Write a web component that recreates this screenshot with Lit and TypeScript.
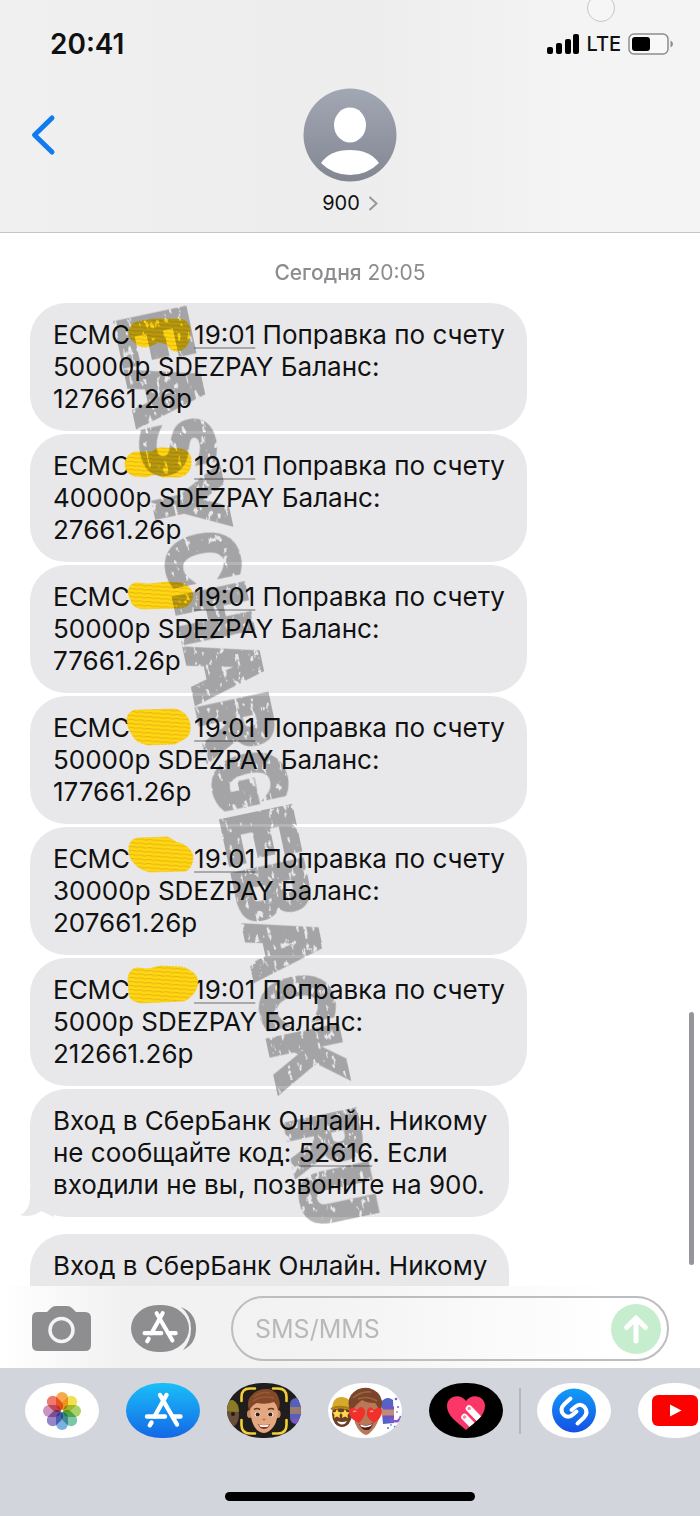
import { LitElement, html, css, svg } from 'lit';
import { customElement, property } from 'lit/decorators.js';

interface Sms {
  lead?: string;
  code?: string;
  before?: string;
  after?: string;
  smudge?: string;
  tail?: boolean;
  gap?: boolean;
}

const MESSAGES: Sms[] = [
  {
    lead: 'ЕСМС',
    code: '19:01',
    after: ' Поправка по счету\n50000р SDEZPAY Баланс:\n127661.26р',
    smudge: 'M9 25Q8 13 22 12L34 10L60 10Q71 12 70 25Q70 36 62 41Q51 45 47 35L38 33Q31 38 24 38Q16 37 15 33Q9 31 9 25Z',
  },
  {
    lead: 'ЕСМС',
    code: '19:01',
    after: ' Поправка по счету\n40000р SDEZPAY Баланс:\n27661.26р',
    smudge: 'M5 24Q6 14 15 12L32 12Q36 7 46 8L62 9Q72 12 71 23Q71 34 60 37L42 37L36 34L26 37L14 36Q5 33 5 24Z',
  },
  {
    lead: 'ЕСМС',
    code: '19:01',
    after: ' Поправка по счету\n50000р SDEZPAY Баланс:\n77661.26р',
    smudge: 'M8 22Q9 11 18 12L28 13L48 11L62 12Q73 17 73 25Q71 36 60 37L22 38Q12 36 11 30Z',
  },
  {
    lead: 'ЕСМС',
    code: '19:01',
    after: ' Поправка по счету\n50000р SDEZPAY Баланс:\n177661.26р',
    smudge: 'M7 17Q8 8 18 8L54 7Q67 9 70 22Q71 32 66 36L55 42L28 43Q15 40 13 34Q7 26 7 17Z',
  },
  {
    lead: 'ЕСМС',
    code: '19:01',
    after: ' Поправка по счету\n30000р SDEZPAY Баланс:\n207661.26р',
    smudge: 'M9 14Q10 5 20 5L48 4L56 9Q70 12 73 23Q73 34 66 38L30 39Q18 36 14 30Q8 24 9 14Z',
  },
  {
    lead: 'ЕСМС',
    code: '19:01',
    after: ' Поправка по счету\n5000р SDEZPAY Баланс:\n212661.26р',
    smudge: 'M8 15Q9 4 18 4L28 5L40 2L62 3Q76 7 78 17Q77 31 64 37L22 39Q10 38 9 30Z',
  },
  {
    before: 'Вход в СберБанк Онлайн. Никому\nне сообщайте код: ',
    code: '52616',
    after: '. Если\nвходили не вы, позвоните на 900.',
    tail: true,
  },
  {
    before: 'Вход в СберБанк Онлайн. Никому',
    gap: true,
  },
];

const PETALS = ['#f9a13a', '#f2dc3c', '#9fcf5a', '#6fc0a0', '#6ba9dc', '#8b78c4', '#c887b8', '#ee6a5e'];

const storeGlyph = svg`
  <g fill="none" stroke="#fff" stroke-width="4.4" stroke-linecap="round">
    <path d="M40.5 12L28.5 33.5M34 12L51 41.5"/>
    <path d="M21 33.5H39M47 33.5H54.5"/>
    <path d="M25.5 39.5L23.8 42.3"/>
  </g>`;

const photos = svg`
  <rect width="74" height="55" fill="#fff"/>
  <g class="petals">
    ${PETALS.map((c, i) => svg`
      <rect x="31" y="9" width="12" height="18" rx="6" fill=${c} transform=${`rotate(${i * 45} 37 28)`}/>`)}
  </g>`;

const store = svg`
  <defs>
    <linearGradient id="store" x1="0" y1="0" x2="0" y2="1">
      <stop offset="0" stop-color="#19bff9"/><stop offset="1" stop-color="#1467e6"/>
    </linearGradient>
  </defs>
  <rect width="74" height="55" fill="url(#store)"/>
  ${storeGlyph}`;

const face = svg`
  <ellipse cx="22.6" cy="31" rx="2.6" ry="4" fill="#d08a63"/>
  <ellipse cx="51" cy="31" rx="2.6" ry="4" fill="#d08a63"/>
  <path d="M23 22Q23 14 37 14Q51 14 51 23Q51.5 36 47 43Q42 50 37 50Q31 50 27 43Q23 36 23 22Z" fill="#e5a780"/>
  <path d="M22 28Q19 17 25 12Q31 5 42 6Q50 8 52 16Q54 22 51 28Q50 22 47 19Q39 22 30 20Q25 22 22 28Z" fill="#83482a"/>
  <path d="M27 14Q34 8 43 10M26 18Q35 12 47 15" stroke="#9a5835" stroke-width="1.5" fill="none"/>`;

const memoji = svg`
  <rect width="74" height="55" fill="#201e1d"/>
  <ellipse cx="4" cy="32" rx="8" ry="12" fill="#6b4d3c"/>
  <path d="M-3 28Q-2 16 6 17Q12 20 12 29Z" fill="#8b7b25"/>
  <circle cx="6" cy="31" r="2" fill="#251b16"/>
  <rect x="63" y="15" width="14" height="26" rx="6" fill="#5660b8"/>
  <rect x="63" y="24" width="12" height="7" fill="#9b7a70"/>
  <path d="M64 36h10v4H66Z" fill="#7f55c0"/>
  ${face}
  <path d="M27 26.5Q30 24.5 33 26.5M41 26.5Q44 24.5 47 26.5" stroke="#6b3b22" stroke-width="1.6" fill="none"/>
  <ellipse cx="30.5" cy="31.5" rx="2.8" ry="2.2" fill="#fff"/><ellipse cx="43.5" cy="31.5" rx="2.8" ry="2.2" fill="#fff"/>
  <circle cx="30.7" cy="31.5" r="2.1" fill="#33201a"/><circle cx="43.3" cy="31.5" r="2.1" fill="#33201a"/>
  <path d="M35.5 36Q37 37.5 38.5 36" stroke="#b96f50" stroke-width="1.3" fill="none"/>
  <path d="M31 41Q37 43 43 41Q41.5 46 37 46Q32.5 46 31 41Z" fill="#8e342c"/>
  <path d="M32 41.6Q37 43 42 41.6L41 43.6Q37 44.6 33 43.6Z" fill="#fff"/>
  <g fill="none" stroke="#f5cf36" stroke-width="2.6" stroke-linecap="round">
    <path d="M14.5 18V14Q14.5 5.5 23 5.5H28"/>
    <path d="M46 5.5H51Q59.5 5.5 59.5 14V18"/>
    <path d="M14.5 37V42Q14.5 50.5 23 50.5H28"/>
    <path d="M46 50.5H51Q59.5 50.5 59.5 42V37"/>
  </g>`;

const stickers = svg`
  <rect width="74" height="55" fill="#fff"/>
  <ellipse cx="14" cy="31" rx="10" ry="13" fill="#6b4026"/>
  <path d="M4 27Q4 14 14 14Q25 15 24 28Q14 23 4 27Z" fill="#d7a928"/>
  <path d="M3 26Q13 21 25 27" stroke="#a77d17" stroke-width="2" fill="none"/>
  <path d="M9 26l1.5 3 3 .5-2 2.5.5 3-3-1.5-3 1.5.5-3-2-2.5 3-.5Z" fill="#ffd94a"/>
  <path d="M17 26l1.5 3 3 .5-2 2.5.5 3-3-1.5-3 1.5.5-3-2-2.5 3-.5Z" fill="#ffd94a"/>
  <path d="M9 38Q14 40 19 38Q17 42 13 41.5Q10 41 9 38Z" fill="#fff"/>
  <path d="M53 19Q59 12 65 17L66 40L55 41Z" fill="#5364c6"/>
  <path d="M53 25h13v9H54Z" fill="#bd8d75"/>
  <path d="M55 25h11M55 34h11" stroke="#7252c8" stroke-width="3"/>
  <path d="M62 37Q72 41 73 33" stroke="#8a55ce" stroke-width="2.5" fill="none"/>
  <g fill="#7b59dc">
    <circle cx="68" cy="16" r="1.3"/><circle cx="70" cy="24" r="1"/><circle cx="67" cy="44" r="1.2"/><circle cx="60" cy="45" r="1"/>
    <circle cx="69" cy="29" r="1" fill="#e670ac"/><circle cx="63" cy="42" r="1" fill="#54b5e6"/>
  </g>
  <path d="M25 24Q25 14 39 13Q52 14 52 25Q52 37 47 44Q42 51 38 52Q31 50 27 40Z" fill="#b97958"/>
  <path d="M23 30Q18 19 23 12Q30 3 41 5Q52 8 54 18Q55 24 51 29Q50 23 47 20Q38 20 34 17Q26 23 23 30Z" fill="#7b452b"/>
  <path d="M25 15Q33 8 43 9M30 16Q39 12 49 18" stroke="#9c6240" stroke-width="1.5" fill="none"/>
  <g fill="#f12f2b">
    <path d="M31 40Q20 35 21 28Q24 22 29 27Q33 21 37 27Q38 33 31 40Z"/>
    <path d="M46 40Q37 34 39 28Q42 21 46 27Q52 22 54 28Q54 35 46 40Z"/>
  </g>
  <path d="M25 29q2-2 3 0M42 29q2-2 3 0" stroke="#ff8d86" stroke-width="1.5" fill="none"/>
  <path d="M31 41Q38 44 45 40Q43 48 38 47Q34 47 31 41Z" fill="#4b1b19"/>
  <path d="M32 41.5Q38 44 44 41L43 43Q38 45.5 33 43.5Z" fill="#fff"/>`;

const touch = svg`
  <defs>
    <clipPath id="heart">
      <path d="M37 47C28 39 18 33 18 23C18 12 32 10 37 18C42 10 56 12 56 23C56 33 46 39 37 47Z"/>
    </clipPath>
  </defs>
  <rect width="74" height="55" fill="#000"/>
  <g clip-path="url(#heart)">
    <rect width="74" height="55" fill="#fb3767"/>
    <path d="M40 25.5L56 42M35.5 34L50 49" stroke="#fff" stroke-width="6.5" stroke-linecap="round"/>
  </g>
  <circle cx="40.2" cy="25.5" r="1.8" fill="#f48ba8"/><circle cx="35.6" cy="34" r="1.8" fill="#f48ba8"/>`;

const shazam = svg`
  <defs>
    <linearGradient id="shazam" x1="0" y1="0" x2="0" y2="1">
      <stop offset="0" stop-color="#129cf7"/><stop offset="1" stop-color="#1450e6"/>
    </linearGradient>
  </defs>
  <rect width="74" height="55" fill="#fff"/>
  <circle cx="37" cy="27.5" r="22" fill="url(#shazam)"/>
  <g fill="none" stroke="#fff" stroke-width="4" stroke-linecap="round">
    <path d="M33.5 15.5L27.5 21Q22 26.5 26.5 31.5Q31 36 36 31.5L39.5 28.5"/>
    <path d="M40.5 40.5L46.5 35Q52 29.5 47.5 24Q43 19.5 38 24L34.5 27"/>
  </g>`;

const youtube = svg`
  <rect width="74" height="55" fill="#fff"/>
  <rect x="14" y="12" width="46" height="31" rx="6" fill="#fd0000"/>
  <path d="M32 21.5L43.5 27.5L32 33.5Z" fill="#fff"/>`;

@customElement('sms-bubble')
export class SmsBubble extends LitElement {
  static styles = css`
    :host {
      display: block;
      position: relative;
      box-sizing: border-box;
      width: fit-content;
      min-height: 128px;
      padding: 16px 22px 16px 23px;
      border-radius: 36px;
      background: #e8e8ea;
      color: #111;
      font-size: 26px;
      line-height: 32px;
      white-space: pre-line;
    }

    .hidden-part {
      display: inline-block;
      position: relative;
      width: 64px;
      height: 20px;
    }

    .smudge {
      position: absolute;
      top: -15px;
      left: -10px;
      width: 80px;
      height: 50px;
    }

    a {
      color: inherit;
      text-decoration: underline;
      text-decoration-color: #a9a9ac;
      text-decoration-thickness: 2px;
      text-underline-offset: 3px;
    }

    .tail {
      position: absolute;
      left: -10px;
      bottom: 0;
      width: 36px;
      height: 30px;
    }
  `;

  @property({ attribute: false }) message!: Sms;

  private renderSmudge(path: string) {
    return html`<span class="hidden-part"><svg class="smudge" viewBox="0 0 80 50" aria-hidden="true">
      <defs>
        <pattern id="hatch" width="9" height="4" patternUnits="userSpaceOnUse" patternTransform="rotate(4)">
          <rect width="9" height="4" fill="#ffd814"/>
          <path d="M0 1L4 0.5L9 1.3" stroke="#e9b010" stroke-width="1" fill="none"/>
        </pattern>
      </defs>
      <path d=${path} fill="url(#hatch)" stroke="#f7ca14" stroke-width="1" stroke-dasharray="2 1"/>
    </svg></span>`;
  }

  render() {
    const m = this.message;
    return html`${m.tail
      ? html`<svg class="tail" viewBox="0 0 36 30" aria-hidden="true"><path d="M10 0V12Q9 24 0 28Q12 31 21 24L34 30V0Z" fill="#e8e8ea"/></svg>`
      : ''}${m.lead}${m.smudge ? this.renderSmudge(m.smudge) : ''}${m.before}${m.code ? html`<a href="#">${m.code}</a>` : ''}${m.after}`;
  }
}

@customElement('app-root')
export class AppRoot extends LitElement {
  static styles = css`
    :host {
      display: flex;
      flex-direction: column;
      height: 100vh;
      overflow: hidden;
      background: #fff;
      font-family: Inter, 'Liberation Sans', sans-serif;
      color: #111;
    }

    svg {
      display: block;
    }

    button {
      padding: 0;
      border: none;
      background: none;
      font: inherit;
      color: inherit;
    }

    header {
      position: relative;
      flex: none;
      border-bottom: 1px solid #c4c4c6;
      background: linear-gradient(90deg, #f0f0f1, #ededee 50%, #f4f4f4 85%);
    }

    .touch-ring {
      position: absolute;
      top: -6px;
      right: 85px;
      width: 26px;
      height: 26px;
      border: 1px solid #c6c6cc;
      border-radius: 50%;
      background: #f6f6f6;
    }

    .status {
      display: flex;
      align-items: center;
      justify-content: space-between;
      height: 88px;
      padding: 0 27px 0 50px;
    }

    .clock {
      font-size: 28px;
      font-weight: 600;
    }

    .signal {
      display: flex;
      align-items: center;
      gap: 7px;
      font-size: 20px;
      font-weight: 500;
    }

    .contact-row {
      display: grid;
      grid-template-columns: 1fr auto 1fr;
      align-items: start;
      padding: 0 28px 16px;
    }

    .back {
      width: 30px;
      margin-top: 26px;
    }

    .contact {
      display: flex;
      flex-direction: column;
      align-items: center;
      gap: 8px;
    }

    .contact-name {
      display: flex;
      align-items: center;
      gap: 8px;
      font-size: 20px;
      line-height: 26px;
    }

    .conversation {
      position: relative;
      flex: 1;
      min-height: 0;
      overflow: hidden;
      padding: 27px 30px 0;
    }

    .date {
      margin: 0 0 17px;
      text-align: center;
      font-size: 21px;
      line-height: 26px;
      color: #8c8c90;
    }

    .date b {
      font-weight: 500;
    }

    .messages {
      display: flex;
      flex-direction: column;
      gap: 3px;
    }

    .spaced {
      margin-top: 14px;
    }

    .watermark {
      position: absolute;
      top: 60px;
      left: 100px;
      font-family: 'DejaVu Sans Mono', monospace;
      font-size: 94px;
      font-weight: 700;
      pointer-events: none;
    }

    .thumb {
      position: absolute;
      top: 74%;
      right: 6px;
      width: 5px;
      height: 24%;
      border-radius: 3px;
      background: #96969a;
    }

    .compose {
      display: flex;
      flex: none;
      align-items: center;
      gap: 34px;
      padding: 10px 31px 7px 32px;
      background: linear-gradient(90deg, #fff, #f1f1f1 18%, #f3f3f3 45%, #fff 88%);
    }

    .apps {
      margin: 0 0 0 6px;
    }

    .field {
      display: flex;
      flex: 1;
      align-items: center;
      min-width: 0;
      box-sizing: border-box;
      height: 65px;
      padding: 0 6px 0 22px;
      border: 2px solid #bdbdbf;
      border-radius: 33px;
    }

    .field input {
      flex: 1;
      min-width: 0;
      padding: 0;
      border: none;
      outline: none;
      background: none;
      font: inherit;
      font-size: 25px;
    }

    .field input::placeholder {
      color: #b9b9bb;
      opacity: 1;
    }

    .dock {
      flex: none;
      background: #d2d5db;
    }

    .strip {
      display: flex;
      align-items: center;
      gap: 27px;
      overflow: hidden;
      padding: 15px 0 0 25px;
    }

    .app {
      flex: none;
      width: 74px;
      height: 55px;
      overflow: hidden;
      border-radius: 36px / 28px;
    }

    .divider {
      flex: none;
      width: 2px;
      height: 46px;
      margin: 0 -11px;
      background: #b5b7bd;
    }

    .petals rect {
      mix-blend-mode: multiply;
      opacity: 0.9;
    }

    .home {
      width: 250px;
      height: 9px;
      margin: 54px auto 15px;
      border-radius: 5px;
      background: #000;
    }
  `;

  private renderApp(label: string, icon: unknown) {
    return html`<button class="app" aria-label=${label}>
      <svg width="74" height="55" viewBox="0 0 74 55">${icon}</svg>
    </button>`;
  }

  private renderHeader() {
    return html`
      <header>
        <div class="touch-ring"></div>
        <div class="status">
          <span class="clock">20:41</span>
          <div class="signal">
            <svg width="32" height="20" viewBox="0 0 32 20">
              <rect x="0" y="13" width="6" height="7" rx="2"/>
              <rect x="9" y="9" width="6" height="11" rx="2"/>
              <rect x="18" y="5" width="6" height="15" rx="2"/>
              <rect x="26" y="0" width="6" height="20" rx="2"/>
            </svg>
            <span>LTE</span>
            <svg width="45" height="22" viewBox="0 0 45 22">
              <rect x="1" y="1" width="39" height="20" rx="5" fill="#f8f8f8" stroke="#8d8d8f" stroke-width="1.5"/>
              <rect x="4" y="4" width="18" height="14" rx="3"/>
              <path d="M42.5 7.5Q45 8.5 45 11Q45 13.5 42.5 14.5Z" fill="#8d8d8f"/>
            </svg>
          </div>
        </div>
        <div class="contact-row">
          <button class="back" aria-label="Назад">
            <svg width="30" height="42" viewBox="0 0 30 42">
              <path d="M24 4L6.5 21L24 38" fill="none" stroke="#0f7bee" stroke-width="5" stroke-linecap="round" stroke-linejoin="round"/>
            </svg>
          </button>
          <button class="contact">
            <svg width="94" height="94" viewBox="0 0 94 94">
              <defs>
                <linearGradient id="avatar" x1="0" y1="0" x2="0" y2="1">
                  <stop offset="0" stop-color="#a2a7b4"/><stop offset="1" stop-color="#838792"/>
                </linearGradient>
              </defs>
              <circle cx="47" cy="47" r="46.5" fill="url(#avatar)"/>
              <ellipse cx="47" cy="37" rx="16" ry="17.5" fill="#fff"/>
              <path d="M18 75Q27 62 47 62Q67 62 76 75Q64 87 47 87Q30 87 18 75Z" fill="#fff"/>
            </svg>
            <span class="contact-name">
              900
              <svg width="10" height="16" viewBox="0 0 10 16">
                <path d="M1.5 2L8.5 8.5L1.5 15" fill="none" stroke="#98989c" stroke-width="2"/>
              </svg>
            </span>
          </button>
        </div>
      </header>`;
  }

  private renderWatermark() {
    return html`
      <svg class="watermark" width="310" height="960" viewBox="0 0 310 960" aria-hidden="true">
        <defs>
          <filter id="worn" x="-2%" y="-10%" width="104%" height="120%">
            <feTurbulence type="fractalNoise" baseFrequency="0.09 0.2" numOctaves="4" seed="8" result="noise"/>
            <feColorMatrix in="noise" type="matrix" values="0 0 0 0 0  0 0 0 0 0  0 0 0 0 0  24 0 0 0 -15.6" result="scratches"/>
            <feComposite in="SourceGraphic" in2="scratches" operator="out"/>
          </filter>
        </defs>
        <g opacity="0.29" stroke="#000" stroke-width="6">
          <g transform="translate(15 23) rotate(78)">
            <text x="0" y="0" filter="url(#worn)">EASYCHARGEBACK</text>
            <text x="821" y="0" filter="url(#worn)">RU</text>
          </g>
        </g>
      </svg>`;
  }

  private renderCompose() {
    return html`
      <div class="compose">
        <button aria-label="Камера">
          <svg width="59" height="46" viewBox="0 0 59 46">
            <path d="M5 6H15L19 2Q21 0 24 0H35Q38 0 40 2L44 6H53Q59 6 59 12V39Q59 45 53 45H6Q0 45 0 39V12Q0 6 5 6Z" fill="#8e8e90"/>
            <circle cx="29.5" cy="24" r="11.5" fill="none" stroke="#f4f4f4" stroke-width="3.5"/>
          </svg>
        </button>
        <button class="apps" aria-label="Приложения">
          <svg width="66" height="47" viewBox="0 0 66 47">
            <path d="M50 2Q65 8 65 23.5Q65 39 52 45Q60 36 60 23.5Q60 10 50 2Z" fill="#8e8e90"/>
            <rect width="58" height="47" rx="27" ry="23.5" fill="#8e8e90"/>
            <g transform="translate(-6 -3) scale(0.93)">${storeGlyph}</g>
          </svg>
        </button>
        <div class="field">
          <input type="text" aria-label="SMS/MMS" placeholder="SMS/MMS" />
          <button aria-label="Отправить">
            <svg width="50" height="50" viewBox="0 0 50 50">
              <circle cx="25" cy="25" r="25" fill="#c7edcf"/>
              <path d="M25 37V15M15.5 23.5L25 14L34.5 23.5" fill="none" stroke="#fff" stroke-width="5" stroke-linecap="round" stroke-linejoin="round"/>
            </svg>
          </button>
        </div>
      </div>`;
  }

  render() {
    return html`
      ${this.renderHeader()}
      <main class="conversation">
        <p class="date"><b>Сегодня</b> 20:05</p>
        <div class="messages">
          ${MESSAGES.map(m => html`<sms-bubble class=${m.gap ? 'spaced' : ''} .message=${m}></sms-bubble>`)}
        </div>
        ${this.renderWatermark()}
        <div class="thumb"></div>
      </main>
      ${this.renderCompose()}
      <div class="dock">
        <div class="strip">
          ${this.renderApp('Фото', photos)}
          ${this.renderApp('App Store', store)}
          ${this.renderApp('Memoji', memoji)}
          ${this.renderApp('Стикеры', stickers)}
          ${this.renderApp('Digital Touch', touch)}
          <div class="divider"></div>
          ${this.renderApp('Shazam', shazam)}
          ${this.renderApp('YouTube', youtube)}
        </div>
        <div class="home"></div>
      </div>`;
  }
}
